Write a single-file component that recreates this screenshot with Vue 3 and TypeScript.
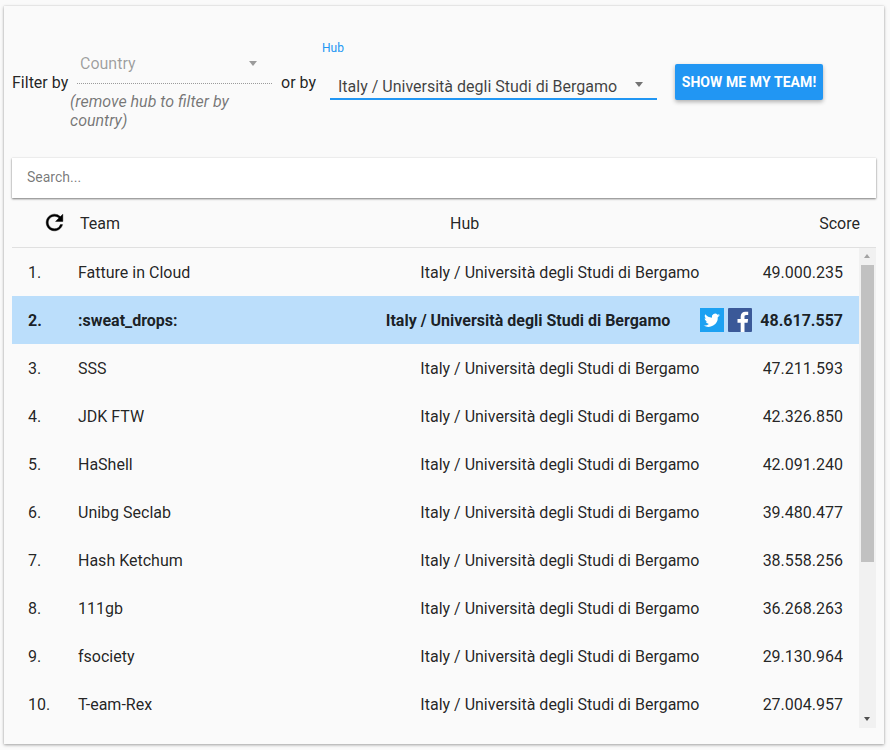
<template>
  <div class="page">
    <div class="card">
      <div class="filters">
        <span class="filter-label">Filter by</span>
        <div class="country">
          <div class="country-select">
            <span>Country</span>
            <i class="caret caret-light"></i>
          </div>
          <p class="hint">(remove hub to filter by country)</p>
        </div>
        <span class="or-label">or by</span>
        <div class="hub">
          <label class="hub-label">Hub</label>
          <div class="hub-select">
            <span>Italy / Università degli Studi di Bergamo</span>
            <i class="caret"></i>
          </div>
        </div>
        <button class="show-btn" type="button">SHOW ME MY TEAM!</button>
      </div>

      <div class="search">Search...</div>

      <div class="table-head">
        <svg class="refresh" viewBox="0 0 24 24" fill="#000" stroke="#000" stroke-width="0.4">
          <path d="M17.65 6.35A7.958 7.958 0 0 0 12 4c-4.42 0-7.99 3.58-7.99 8s3.57 8 7.99 8c3.73 0 6.84-2.55 7.73-6h-2.08A5.99 5.99 0 0 1 12 18c-3.31 0-6-2.69-6-6s2.69-6 6-6c1.66 0 3.14.69 4.22 1.78L13 11h7V4l-2.35 2.35z" />
        </svg>
        <span class="head-team">Team</span>
        <span class="head-hub">Hub</span>
        <span class="head-score">Score</span>
      </div>

      <div class="table-body">
        <div class="rows">
          <div v-for="(row, i) in rows" :key="row.team" class="row" :class="{ mine: row.mine }">
            <span class="rank">{{ i + 1 }}.</span>
            <span class="team">{{ row.team }}</span>
            <span class="row-hub">{{ hubName }}</span>
            <span v-if="row.mine" class="socials">
              <svg class="social" viewBox="0 0 24 24">
                <rect width="24" height="24" fill="#1da1f2" />
                <path fill="#fff" d="M20 7.2c-.6.3-1.2.4-1.9.5.7-.4 1.200-1 1.400-1.800-.6.4-1.300.6-2 .8a3.300 3.300 0 0 0-5.600 3c-2.700-.1-5.100-1.400-6.700-3.400-.9 1.500-.4 3.400 1 4.400-.5 0-1-.2-1.500-.4 0 1.600 1.100 2.900 2.600 3.200-.5.100-1 .2-1.500.1.400 1.300 1.600 2.200 3.100 2.300A6.600 6.600 0 0 1 3.500 17.300a9.300 9.300 0 0 0 14.300-8.300c.9-.4 1.600-1 2.200-1.800z" />
              </svg>
              <svg class="social" viewBox="0 0 24 24">
                <rect width="24" height="24" rx="1" fill="#3b5998" />
                <path fill="#fff" d="M16.500 24v-9.300h3.100l.5-3.600h-3.600V8.800c0-1 .3-1.800 1.800-1.800h1.900V3.800c-.3 0-1.500-.1-2.800-.1-2.800 0-4.700 1.700-4.700 4.800v2.600H9.500v3.600h3.200V24z" />
              </svg>
            </span>
            <span class="row-score">{{ row.score }}</span>
          </div>
        </div>
        <div class="scrollbar">
          <i class="arrow arrow-up"></i>
          <div class="thumb"></div>
          <i class="arrow arrow-down"></i>
        </div>
      </div>
    </div>
  </div>
</template>

<script setup lang="ts">
interface Row {
  team: string
  score: string
  mine?: boolean
}

const hubName = 'Italy / Università degli Studi di Bergamo'

const rows: Row[] = [
  { team: 'Fatture in Cloud', score: '49.000.235' },
  { team: ':sweat_drops:', score: '48.617.557', mine: true },
  { team: 'SSS', score: '47.211.593' },
  { team: 'JDK FTW', score: '42.326.850' },
  { team: 'HaShell', score: '42.091.240' },
  { team: 'Unibg Seclab', score: '39.480.477' },
  { team: 'Hash Ketchum', score: '38.558.256' },
  { team: '111gb', score: '36.268.263' },
  { team: 'fsociety', score: '29.130.964' },
  { team: 'T-eam-Rex', score: '27.004.957' }
]
</script>

<style>
html,
body {
  margin: 0;
  background: #fafafa;
}
</style>

<style scoped>
.page {
  width: 890px;
  height: 750px;
  padding: 6px 6px 6px 4px;
  box-sizing: border-box;
  font-family: Roboto, "Liberation Sans", sans-serif;
  font-size: 16px;
  color: rgba(0, 0, 0, 0.87);
  overflow: hidden;
}

.card {
  height: 738px;
  box-sizing: border-box;
  padding: 0 8px;
  background: #fafafa;
  box-shadow: 0 1px 3px rgba(0, 0, 0, 0.35), 0 0 1px rgba(0, 0, 0, 0.15);
}

.filters {
  display: flex;
  align-items: flex-start;
  height: 152px;
}

.filter-label {
  width: 59px;
  margin-top: 67px;
  line-height: 19px;
}

.country {
  width: 201px;
  margin-top: 42px;
}

.country-select {
  display: flex;
  justify-content: space-between;
  align-items: center;
  height: 36px;
  margin-left: 6px;
  padding: 0 15px 5px 3px;
  box-sizing: border-box;
  border-bottom: 1px dotted rgba(0, 0, 0, 0.38);
  color: rgba(0, 0, 0, 0.38);
}

.hint {
  margin: 8px 0 0 -1px;
  font-style: italic;
  line-height: 19px;
  color: rgba(0, 0, 0, 0.54);
}

.or-label {
  margin: 67px 0 0 9px;
  width: 49px;
  line-height: 19px;
}

.hub {
  width: 327px;
}

.hub-label {
  display: block;
  margin-top: 36px;
  height: 27px;
  margin-left: -8px;
  font-size: 12px;
  line-height: 12px;
  color: #2196f3;
}

.hub-select {
  display: flex;
  align-items: center;
  justify-content: space-between;
  height: 31px;
  box-sizing: border-box;
  padding: 5px 14px 0 8px;
  border-bottom: 2px solid #2196f3;
  color: rgba(0, 0, 0, 0.75);
}

.hub-select .caret {
  margin-top: -3px;
}

.caret {
  width: 0;
  height: 0;
  border-left: 4.5px solid transparent;
  border-right: 4.5px solid transparent;
  border-top: 5px solid rgba(0, 0, 0, 0.54);
}

.caret-light {
  border-top-color: rgba(0, 0, 0, 0.38);
}

.show-btn {
  width: 148px;
  height: 36px;
  margin: 58px 0 0 18px;
  padding: 0 0 1px;
  border: 0;
  border-radius: 2px;
  background: #2196f3;
  color: #fff;
  font-family: inherit;
  font-size: 14px;
  font-weight: 700;
  letter-spacing: 0.08px;
  box-shadow: 0 2px 4px rgba(0, 0, 0, 0.3);
}

.search {
  height: 40px;
  padding-left: 15px;
  background: #fff;
  font-size: 14px;
  line-height: 38px;
  color: rgba(0, 0, 0, 0.54);
  box-shadow: 0 1px 2px rgba(0, 0, 0, 0.5), 0 0 1px rgba(0, 0, 0, 0.12);
}

.table-head {
  display: flex;
  align-items: center;
  height: 50px;
  box-sizing: border-box;
  border-bottom: 1px solid #e0e0e0;
}

.refresh {
  width: 25px;
  height: 25px;
  margin-left: 29.500px;
}

.head-team {
  margin-left: 13.500px;
  width: 370px;
  padding-top: 2px;
}

.head-hub {
  flex: 1;
  padding-top: 2px;
}

.head-score {
  margin-right: 16px;
  padding-top: 2px;
}

.table-body {
  display: flex;
  height: 480px;
}

.rows {
  width: 847px;
}

.row {
  display: flex;
  align-items: center;
  height: 48px;
  padding: 0 16px;
  box-sizing: border-box;
}

.mine {
  background: #bbdefb;
  font-weight: 700;
}

.rank {
  width: 50px;
}

.team {
  flex: 1;
}

.socials {
  display: flex;
  gap: 4px;
  margin-left: 30px;
}

.social {
  display: block;
  width: 24px;
  height: 24px;
}

.row-score {
  width: 114px;
  text-align: right;
  margin-left: 29.500px;
}

.mine .row-score {
  width: auto;
  margin-left: 8px;
}

.scrollbar {
  position: relative;
  width: 17px;
  background: #f1f1f1;
}

.thumb {
  position: absolute;
  top: 17px;
  left: 2px;
  width: 13px;
  height: 297px;
  background: #c1c1c1;
}

.arrow {
  position: absolute;
  left: 5px;
  width: 0;
  height: 0;
  border-left: 3.5px solid transparent;
  border-right: 3.5px solid transparent;
}

.arrow-up {
  top: 6px;
  border-bottom: 4px solid #a3a3a3;
}

.arrow-down {
  bottom: 7px;
  border-top: 4px solid #505050;
}
</style>
